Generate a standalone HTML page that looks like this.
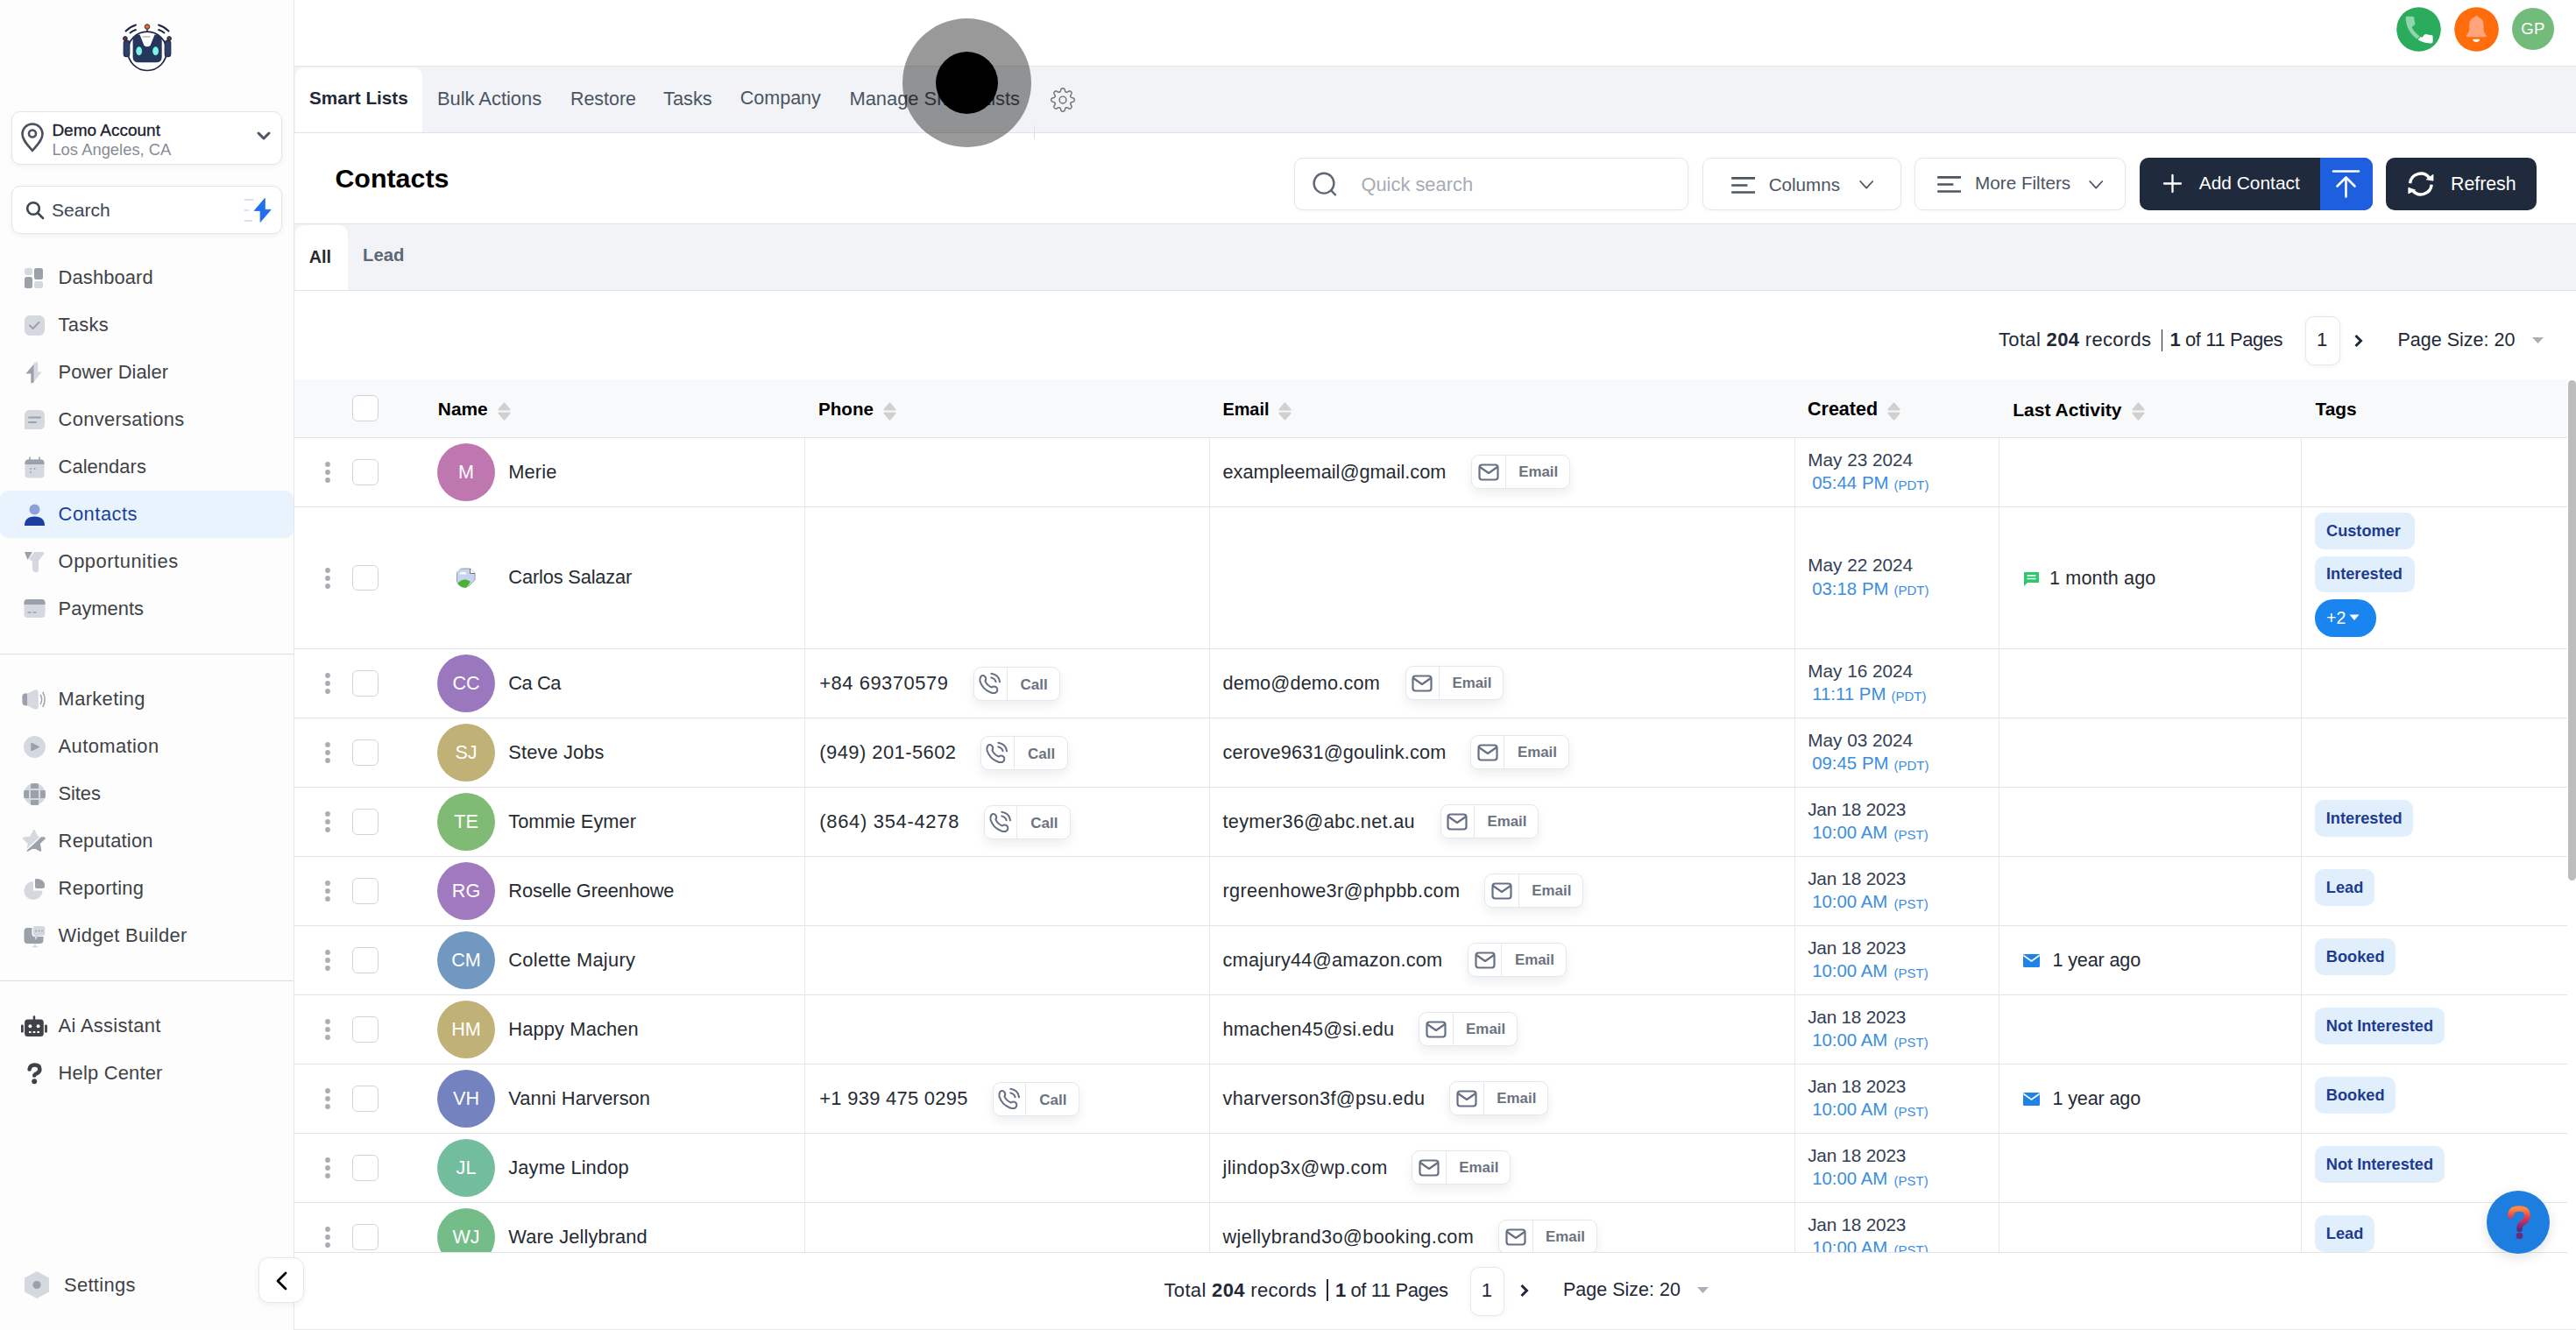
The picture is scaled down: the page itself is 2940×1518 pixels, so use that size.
<!DOCTYPE html>
<html><head><meta charset="utf-8"><style>
html,body{margin:0;padding:0;}
body{width:2940px;height:1518px;position:relative;overflow:hidden;background:#fff;font-family:"Liberation Sans", sans-serif;}
.t{position:absolute;white-space:nowrap;line-height:1;}
svg{overflow:visible}
b{font-weight:700}
</style></head><body>
<div style="position:absolute;left:0px;top:0px;width:335px;height:1518px;background:#fdfdfd"></div>
<div style="position:absolute;left:335px;top:0px;width:1px;height:1518px;background:#e6e7ea"></div>
<svg style="position:absolute;left:138px;top:24px;" width="60" height="60" viewBox="0 0 60 60">
<line x1="30" y1="8" x2="30" y2="12.5" stroke="#1c2541" stroke-width="1.4"/>
<circle cx="30" cy="6.5" r="2.8" fill="#e8643c" stroke="#2a2030" stroke-width="0.9"/>
<circle cx="30" cy="34.3" r="22.2" fill="#fff" stroke="#1c2541" stroke-width="1.7"/>
<path d="M5.5 11.5 Q10.5 6.5 17 4.5" stroke="#1c2541" stroke-width="1.9" fill="none" stroke-linecap="round"/>
<path d="M10.5 13.5 Q13.5 11 17 10" stroke="#1c2541" stroke-width="1.9" fill="none" stroke-linecap="round"/>
<path d="M54.5 11.5 Q49.5 6.5 43 4.5" stroke="#1c2541" stroke-width="1.9" fill="none" stroke-linecap="round"/>
<path d="M49.5 13.5 Q46.5 11 43 10" stroke="#1c2541" stroke-width="1.9" fill="none" stroke-linecap="round"/>
<line x1="5" y1="20" x2="7" y2="24" stroke="#1c2541" stroke-width="1.2"/>
<line x1="55" y1="20" x2="53" y2="24" stroke="#1c2541" stroke-width="1.2"/>
<circle cx="4.9" cy="20" r="2.4" fill="#6a3040" stroke="#1c2541" stroke-width="0.9"/>
<circle cx="55.1" cy="20" r="2.4" fill="#6a3040" stroke="#1c2541" stroke-width="0.9"/>
<rect x="3.2" y="22" width="6.6" height="18.7" rx="3.3" fill="#2e3f6a" stroke="#1c2541" stroke-width="1.1"/>
<rect x="50.2" y="22" width="6.6" height="18.7" rx="3.3" fill="#2e3f6a" stroke="#1c2541" stroke-width="1.1"/>
<path d="M13.6 22 Q14 15.8 21.5 15.5 L26.5 28 Q30 30.5 33.5 28 L38.6 15.5 Q46.3 15.8 46.7 22 L46.7 41 Q46.7 47.3 40 47.3 L20 47.3 Q13.6 47.3 13.6 41 Z" fill="#26375e"/>
<path d="M24 17 L34 17 L33 19 L25.5 19 Z" fill="#c9c9c9"/>
<ellipse cx="20.7" cy="34.2" rx="3.4" ry="5" fill="#7df3e6"/>
<ellipse cx="39.6" cy="34.2" rx="3.4" ry="5" fill="#7df3e6"/>
</svg>
<div style="position:absolute;left:12.5px;top:126.5px;width:309.5px;height:61px;box-sizing:border-box;border:1px solid #e3e5e8;border-radius:10px;background:#fff;box-shadow:0 2px 6px rgba(16,24,40,.05)"></div>
<svg style="position:absolute;left:23px;top:139px;" width="28" height="36" viewBox="0 0 28 36"><path d="M14 2.5 C7.5 2.5 2.5 7.5 2.5 14 C2.5 21 9 27 14 33 C19 27 25.5 21 25.5 14 C25.5 7.5 20.5 2.5 14 2.5 Z" fill="none" stroke="#4b5260" stroke-width="2.6" stroke-linejoin="round"/><circle cx="14" cy="13.5" r="4" fill="none" stroke="#4b5260" stroke-width="2.6"/></svg>
<div class="t" style="left:59.4px;top:138.5px;font-size:19.0px;font-weight:400;color:#1a2030;-webkit-text-stroke:0.3px #1a2030">Demo Account</div>
<div class="t" style="left:59.4px;top:162.4px;font-size:18.4px;font-weight:400;color:#878c94;">Los Angeles, CA</div>
<svg style="position:absolute;left:292px;top:150px;" width="18" height="10" viewBox="0 0 18 10"><path d="M3 2 L9 8 L15 2" fill="none" stroke="#4b5260" stroke-width="3" stroke-linecap="round" stroke-linejoin="round"/></svg>
<div style="position:absolute;left:12.5px;top:212.3px;width:309.5px;height:55px;box-sizing:border-box;border:1px solid #e3e5e8;border-radius:10px;background:#fff;box-shadow:0 2px 6px rgba(16,24,40,.05)"></div>
<svg style="position:absolute;left:28px;top:228px;" width="24" height="24" viewBox="0 0 24 24"><circle cx="10" cy="10" r="6.8" fill="none" stroke="#3e4753" stroke-width="2.6"/><path d="M15 15 L21 21" stroke="#3e4753" stroke-width="2.6" stroke-linecap="round"/></svg>
<div class="t" style="left:59.0px;top:228.7px;font-size:21.1px;font-weight:400;color:#3e4753;">Search</div>
<svg style="position:absolute;left:276px;top:225px;" width="36" height="30" viewBox="0 0 36 30"><path d="M3 3 H13.6 M3 14.9 H7.8 M3 27.1 H12" stroke="#dcdff6" stroke-width="2"/><path d="M26.4 1.2 L26.4 14.3 L33.2 14.3 L21.1 28.4 L21.1 15.5 L14.2 15.5 Z" fill="#1f6ff0" stroke="#1f6ff0" stroke-width="0.8" stroke-linejoin="round"/></svg>
<div style="position:absolute;left:0px;top:559.8px;width:334.6px;height:54px;background:#e8f3fe;border-radius:9px"></div>
<div class="t" style="left:66.6px;top:305.5px;font-size:21.9px;font-weight:400;color:#3f4246;letter-spacing:0.120px;">Dashboard</div>
<svg style="position:absolute;left:27px;top:304.5px;" width="25" height="25" viewBox="0 0 25 25"><rect x="1" y="1" width="9" height="8" rx="2.5" fill="#d5d8de"/><rect x="12" y="1" width="10" height="13" rx="2.5" fill="#9ba1ab"/><rect x="1" y="11" width="9" height="13" rx="2.5" fill="#9ba1ab"/><rect x="12" y="16" width="10" height="8" rx="2.5" fill="#d5d8de"/></svg>
<div class="t" style="left:66.6px;top:359.5px;font-size:21.9px;font-weight:400;color:#3f4246;letter-spacing:0.280px;">Tasks</div>
<svg style="position:absolute;left:27px;top:358.5px;" width="25" height="25" viewBox="0 0 25 25"><rect x="1" y="1" width="23" height="23" rx="6" fill="#d5d8de"/><path d="M7 12.5 L10.5 16 L17.5 9" fill="none" stroke="#9ba1ab" stroke-width="2" stroke-linecap="round" stroke-linejoin="round"/></svg>
<div class="t" style="left:66.6px;top:413.5px;font-size:21.9px;font-weight:400;color:#3f4246;letter-spacing:0.004px;">Power Dialer</div>
<svg style="position:absolute;left:27px;top:412.5px;" width="25" height="25" viewBox="0 0 25 25"><path d="M3.1 12.5 L11.8 2.5 L11.8 22.4 Q11.5 24.2 8.3 24.2 L8.3 13.4 L3.1 13.4 Z" fill="#9ba1ab"/><path d="M11.8 0.7 L16.2 0.5 L16.2 11.5 L20.7 11.5 L11.8 22.4 Z" fill="#d5d8de"/></svg>
<div class="t" style="left:66.6px;top:467.5px;font-size:21.9px;font-weight:400;color:#3f4246;letter-spacing:0.301px;">Conversations</div>
<svg style="position:absolute;left:27px;top:466.5px;" width="25" height="25" viewBox="0 0 25 25"><path d="M1 7 Q1 1 7 1 L18 1 Q24 1 24 7 L24 17 Q24 23 18 23 L1 23 Z" fill="#d5d8de"/><path d="M6 9.5 H19 M6 15 H14" stroke="#9ba1ab" stroke-width="2" stroke-linecap="round"/></svg>
<div class="t" style="left:66.6px;top:521.5px;font-size:21.9px;font-weight:400;color:#3f4246;letter-spacing:0.060px;">Calendars</div>
<svg style="position:absolute;left:27px;top:520.5px;" width="25" height="25" viewBox="0 0 25 25"><rect x="1.5" y="3.5" width="22" height="21" rx="4" fill="#d5d8de"/><path d="M1.5 7.5 Q1.5 3.5 5.5 3.5 L19.5 3.5 Q23.5 3.5 23.5 7.5 L23.5 9 L1.5 9 Z" fill="#9ba1ab"/><path d="M7 0.5 V4 M18 0.5 V4" stroke="#9ba1ab" stroke-width="1.6"/><circle cx="8" cy="14" r="1" fill="#9ba1ab"/><circle cx="12.5" cy="14" r="1" fill="#9ba1ab"/><circle cx="8" cy="18" r="1" fill="#9ba1ab"/></svg>
<div class="t" style="left:66.6px;top:575.5px;font-size:21.9px;font-weight:400;color:#1d3fa0;letter-spacing:0.511px;">Contacts</div>
<svg style="position:absolute;left:27px;top:574.5px;" width="25" height="25" viewBox="0 0 25 25"><circle cx="12.5" cy="6.5" r="6" fill="#8ea0d8"/><path d="M1 25 Q1 14.5 12.5 14.5 Q24 14.5 24 25 Z" fill="#1d3f9e"/></svg>
<div class="t" style="left:66.6px;top:629.5px;font-size:21.9px;font-weight:400;color:#3f4246;letter-spacing:0.529px;">Opportunities</div>
<svg style="position:absolute;left:27px;top:628.5px;" width="25" height="25" viewBox="0 0 25 25"><path d="M1 1 L10 1 L4.5 10 Z" fill="#9ba1ab"/><path d="M12 1 L22 1 Q24 1 23 3.5 L17 11 L17 21 Q17 25 13 24 Q10 23.5 10 20 L10 12 L6 9 Z" fill="#d5d8de"/></svg>
<div class="t" style="left:66.6px;top:683.5px;font-size:21.9px;font-weight:400;color:#3f4246;letter-spacing:0.004px;">Payments</div>
<svg style="position:absolute;left:27px;top:682.5px;" width="25" height="25" viewBox="0 0 25 25"><rect x="0.5" y="1" width="24" height="21" rx="4" fill="#d5d8de"/><path d="M0.5 5 Q0.5 1 4.5 1 L20.5 1 Q24.5 1 24.5 5 L24.5 7 L0.5 7 Z" fill="#9ba1ab"/><path d="M4.5 16 H8.5 M10.5 16 H14.5" stroke="#9ba1ab" stroke-width="1.5"/></svg>
<div class="t" style="left:66.6px;top:786.5px;font-size:21.9px;font-weight:400;color:#3f4246;letter-spacing:0.343px;">Marketing</div>
<svg style="position:absolute;left:27px;top:785.5px;" width="25" height="25" viewBox="0 0 25 25"><path d="M4 5.5 L4 19.2 L1.5 19.2 Q-1.6 19 -1.6 15 L-1.6 9.5 Q-1.6 5.7 1.5 5.5 Z" fill="#9ba1ab"/><path d="M4 5.5 L12 1.8 Q16.8 0 16.8 5 L16.8 19.8 Q16.8 25 12 23.2 L4 19.2 Z" fill="#d5d8de"/><path d="M19.3 7.3 Q22 12.4 19.3 17.5 M22 4.3 Q26.3 12.4 22 20.5" fill="none" stroke="#9ba1ab" stroke-width="1.5" stroke-linecap="round"/></svg>
<div class="t" style="left:66.6px;top:840.5px;font-size:21.9px;font-weight:400;color:#3f4246;letter-spacing:0.424px;">Automation</div>
<svg style="position:absolute;left:27px;top:839.5px;" width="25" height="25" viewBox="0 0 25 25"><circle cx="12.5" cy="12.5" r="12.5" fill="#d5d8de"/><path d="M9 8.5 L17 12.5 L9 16.5 Z" fill="#9ba1ab" stroke="#9ba1ab" stroke-width="1.5" stroke-linejoin="round"/></svg>
<div class="t" style="left:66.6px;top:894.5px;font-size:21.9px;font-weight:400;color:#3f4246;letter-spacing:-0.097px;">Sites</div>
<svg style="position:absolute;left:27px;top:893.5px;" width="25" height="25" viewBox="0 0 25 25"><circle cx="12.5" cy="12.5" r="12.5" fill="#d5d8de"/><g fill="#9ba1ab"><rect x="8" y="8" width="9" height="9"/><path d="M8 0.5 Q12.5 -0.5 17 0.5 L17 6 L8 6 Z"/><path d="M8 24.5 Q12.5 25.5 17 24.5 L17 19 L8 19 Z"/><path d="M0.5 8 Q-0.5 12.5 0.5 17 L6 17 L6 8 Z"/><path d="M24.5 8 Q25.5 12.5 24.5 17 L19 17 L19 8 Z"/></g></svg>
<div class="t" style="left:66.6px;top:948.5px;font-size:21.9px;font-weight:400;color:#3f4246;letter-spacing:0.230px;">Reputation</div>
<svg style="position:absolute;left:27px;top:947.5px;" width="25" height="25" viewBox="0 0 25 25"><defs><clipPath id="rl"><path d="M-19.19 42.18 L31.77 -5.80 L4.35 -34.93 L-46.61 13.06 Z"/></clipPath><clipPath id="rd"><path d="M-18.09 43.35 L32.87 -4.64 L60.29 24.48 L9.33 72.47 Z"/></clipPath></defs><path clip-path="url(#rl)" d="M11.80 0.00 L15.44 7.58 L23.78 8.71 L17.70 14.52 L19.21 22.79 L11.80 18.80 L4.39 22.79 L5.90 14.52 L-0.18 8.71 L8.16 7.58 Z" fill="#d5d8de" stroke="#d5d8de" stroke-width="2.2" stroke-linejoin="round"/><path clip-path="url(#rd)" d="M11.80 0.00 L15.44 7.58 L23.78 8.71 L17.70 14.52 L19.21 22.79 L11.80 18.80 L4.39 22.79 L5.90 14.52 L-0.18 8.71 L8.16 7.58 Z" fill="#9ba1ab" stroke="#9ba1ab" stroke-width="2.2" stroke-linejoin="round"/></svg>
<div class="t" style="left:66.6px;top:1002.5px;font-size:21.9px;font-weight:400;color:#3f4246;letter-spacing:0.305px;">Reporting</div>
<svg style="position:absolute;left:27px;top:1001.5px;" width="25" height="25" viewBox="0 0 25 25"><path d="M11 4 A10.5 10.5 0 1 0 21.5 14.5 L11 14.5 Z" fill="#d5d8de"/><path d="M14 1 A10 10 0 0 1 24 11 L14 11 Z" fill="#9ba1ab" stroke="#fff" stroke-width="0"/><path d="M14 1 Q24 1 24 9 Q24 12 21 12 L15 12 Q13 12 13 10 L13 2 Q13 1 14 1Z" fill="#9ba1ab"/></svg>
<div class="t" style="left:66.6px;top:1056.5px;font-size:21.9px;font-weight:400;color:#3f4246;letter-spacing:0.330px;">Widget Builder</div>
<svg style="position:absolute;left:27px;top:1055.5px;" width="25" height="25" viewBox="0 0 25 25"><rect x="0.5" y="3" width="22" height="18" rx="4" fill="#9ba1ab"/><path d="M10 24.5 H16 M13 21 V24.5" stroke="#d5d8de" stroke-width="1.5"/><rect x="10" y="0.5" width="15" height="12" rx="3" fill="#d5d8de" stroke="#fff" stroke-width="1.2"/><path d="M13 17 L13 12 L17 12 Z" fill="#d5d8de"/><circle cx="14" cy="6.5" r="0.9" fill="#9ba1ab"/><circle cx="17.5" cy="6.5" r="0.9" fill="#9ba1ab"/><circle cx="21" cy="6.5" r="0.9" fill="#9ba1ab"/></svg>
<div class="t" style="left:66.6px;top:1159.8px;font-size:21.9px;font-weight:400;color:#3f4246;letter-spacing:0.317px;">Ai Assistant</div>
<svg style="position:absolute;left:24px;top:1159.8px;" width="30" height="26" viewBox="0 0 30 26"><rect x="4.1" y="3.4" width="21.7" height="19.6" rx="3.5" fill="#3f4246"/><rect x="13.7" y="-0.7" width="2.5" height="5" rx="1.2" fill="#3f4246"/><rect x="0" y="9.5" width="2.8" height="9.1" rx="1.2" fill="#3f4246"/><rect x="27.1" y="9.5" width="2.8" height="9.1" rx="1.2" fill="#3f4246"/><circle cx="10.4" cy="11.2" r="1.95" fill="#fff"/><circle cx="19.6" cy="11.2" r="1.95" fill="#fff"/><path d="M9 17.9 H11.6 M13.7 17.9 H16.3 M18.4 17.9 H21" stroke="#fff" stroke-width="2"/></svg>
<div class="t" style="left:66.6px;top:1213.5px;font-size:21.9px;font-weight:400;color:#3f4246;letter-spacing:0.194px;">Help Center</div>
<svg style="position:absolute;left:30px;top:1213.5px;" width="19" height="25" viewBox="0 0 19 25"><path d="M3.6 6.6 Q4.2 1.6 9.6 1.6 Q15.4 1.6 15.4 6.6 Q15.4 9.4 12.3 11 Q9.2 12.5 9.2 13.6" fill="none" stroke="#3f4246" stroke-width="4.5" stroke-linecap="round" stroke-linejoin="round"/><circle cx="9.2" cy="20.3" r="2.95" fill="#3f4246"/></svg>
<div style="position:absolute;left:0px;top:746px;width:335px;height:1px;background:#dcdde0"></div>
<div style="position:absolute;left:0px;top:1119px;width:335px;height:1px;background:#dcdde0"></div>
<svg style="position:absolute;left:27px;top:1451px;" width="30" height="31" viewBox="0 0 30 31"><path d="M15 1 L28 8.2 L28 22.8 L15 30 L2 22.8 L2 8.2 Z" fill="#d5d8de" stroke="#d5d8de" stroke-width="2" stroke-linejoin="round"/><circle cx="15" cy="15.5" r="4.6" fill="#9ba1ab"/></svg>
<div class="t" style="left:73.0px;top:1455.9px;font-size:21.9px;font-weight:400;color:#3f4246;letter-spacing:0.338px;">Settings</div>
<div style="position:absolute;left:294.5px;top:1435.2px;width:52px;height:52px;box-sizing:border-box;background:#fff;border:1px solid #e6e7ea;border-radius:12px;box-shadow:0 2px 6px rgba(16,24,40,.06)"></div>
<svg style="position:absolute;left:312px;top:1450px;" width="18" height="24" viewBox="0 0 18 24"><path d="M14 3 L5 12 L14 21" fill="none" stroke="#000" stroke-width="2.8" stroke-linecap="round" stroke-linejoin="round"/></svg>
<div style="position:absolute;left:336px;top:75px;width:2604px;height:1px;background:#e3e5e8"></div>
<svg style="position:absolute;left:2735px;top:8px;" width="52" height="52" viewBox="0 0 52 52"><defs><clipPath id="pc1"><path d="M-5 -5 H33.5 L-5 33.5 Z"/></clipPath><clipPath id="pc2"><path d="M34.5 -5 H40 V40 H-5 V34.5 Z"/></clipPath></defs><circle cx="25.5" cy="25.5" r="25.3" fill="#2aac5c"/><g transform="translate(5.5,5.5) scale(1.72)"><path clip-path="url(#pc1)" d="M20.01 15.38c-1.23 0-2.42-.2-3.530-.56-.35-.12-.74-.03-1.01.24l-1.57 1.97c-2.83-1.35-5.48-3.9-6.89-6.83l1.95-1.66c.27-.28.35-.67.24-1.02-.37-1.11-.56-2.3-.56-3.53 0-.54-.45-.99-.99-.99H4.19C3.65 3 3 3.24 3 3.99 3 13.28 10.73 21 20.01 21c.71 0 .99-.63.99-1.18v-3.45c0-.54-.45-.99-.99-.99z" fill="#8fd6ab"/><path clip-path="url(#pc2)" d="M20.01 15.38c-1.23 0-2.42-.2-3.530-.56-.35-.12-.74-.03-1.01.24l-1.57 1.97c-2.83-1.35-5.48-3.9-6.89-6.83l1.950-1.66c.27-.28.35-.67.24-1.02-.37-1.11-.56-2.3-.56-3.53 0-.54-.45-.99-.99-.99H4.19C3.65 3 3 3.24 3 3.99 3 13.28 10.73 21 20.01 21c.71 0 .99-.63.99-1.18v-3.45c0-.54-.45-.99-.99-.99z" fill="#fff"/></g></svg>
<svg style="position:absolute;left:2801px;top:8px;" width="52" height="52" viewBox="0 0 52 52"><circle cx="25.5" cy="25.5" r="25.3" fill="#fe6c0b"/><path d="M25.3 9.9 Q27 9.9 27.3 11.6 Q33.5 13.2 33.5 20.5 L33.5 26 Q34 30 36.8 32.2 Q37.2 34.3 35 34.3 L15.6 34.3 Q13.4 34.3 13.8 32.2 Q16.6 30 17.1 26 L17.1 20.5 Q17.1 13.2 23.3 11.6 Q23.6 9.9 25.3 9.9 Z" fill="#ffa47c"/><path d="M21 36.8 L29.4 36.8 Q28.5 40 25.2 40 Q21.9 40 21 36.8 Z" fill="#fff"/></svg>
<div style="position:absolute;left:2867px;top:9px;width:48px;height:48px;border-radius:50%;background:#72bb7a;color:#fff;font-size:18.6px;line-height:48px;text-align:center;letter-spacing:0.3px">GP</div>
<div style="position:absolute;left:336px;top:76px;width:2604px;height:75px;background:#f1f3f6"></div>
<div style="position:absolute;left:336px;top:151px;width:2604px;height:1px;background:#dfe2e6"></div>
<div style="position:absolute;left:337px;top:76.5px;width:145.4px;height:74.5px;background:#fff;border-radius:10px 10px 0 0"></div>
<div class="t" style="left:353.0px;top:102.1px;font-size:20.7px;font-weight:700;color:#1f2937;">Smart Lists</div>
<div class="t" style="left:498.9px;top:102.1px;font-size:21.9px;font-weight:400;color:#4a5563;">Bulk Actions</div>
<div class="t" style="left:651.0px;top:102.5px;font-size:21.4px;font-weight:400;color:#4a5563;">Restore</div>
<div class="t" style="left:757.0px;top:102.1px;font-size:21.8px;font-weight:400;color:#4a5563;">Tasks</div>
<div class="t" style="left:844.8px;top:102.4px;font-size:21.5px;font-weight:400;color:#4a5563;">Company</div>
<div class="t" style="left:969.4px;top:102.1px;font-size:21.9px;font-weight:400;color:#4a5563;">Manage Smart Lists</div>
<svg style="position:absolute;left:1198px;top:98.5px;" width="30" height="30" viewBox="0 0 30 30"><path d="M15.00 1.80 L15.35 1.82 L15.69 1.86 L16.03 1.96 L16.35 2.12 L16.66 2.37 L16.94 2.76 L17.17 3.30 L17.35 3.94 L17.51 4.56 L17.66 5.07 L17.83 5.44 L18.02 5.70 L18.23 5.88 L18.45 6.02 L18.67 6.13 L18.91 6.21 L19.17 6.27 L19.44 6.28 L19.76 6.24 L20.14 6.10 L20.61 5.85 L21.16 5.51 L21.74 5.19 L22.28 4.97 L22.75 4.89 L23.15 4.93 L23.50 5.05 L23.80 5.23 L24.08 5.43 L24.33 5.67 L24.57 5.92 L24.77 6.20 L24.95 6.50 L25.07 6.85 L25.11 7.25 L25.03 7.72 L24.81 8.26 L24.49 8.84 L24.15 9.39 L23.90 9.86 L23.76 10.24 L23.72 10.56 L23.73 10.83 L23.79 11.09 L23.87 11.33 L23.98 11.55 L24.12 11.77 L24.30 11.98 L24.56 12.17 L24.93 12.34 L25.44 12.49 L26.06 12.65 L26.70 12.83 L27.24 13.06 L27.63 13.34 L27.88 13.65 L28.04 13.97 L28.14 14.31 L28.18 14.65 L28.20 15.00 L28.18 15.35 L28.14 15.69 L28.04 16.03 L27.88 16.35 L27.63 16.66 L27.24 16.94 L26.70 17.17 L26.06 17.35 L25.44 17.51 L24.93 17.66 L24.56 17.83 L24.30 18.02 L24.12 18.23 L23.98 18.45 L23.87 18.67 L23.79 18.91 L23.73 19.17 L23.72 19.44 L23.76 19.76 L23.90 20.14 L24.15 20.61 L24.49 21.16 L24.81 21.74 L25.03 22.28 L25.11 22.75 L25.07 23.15 L24.95 23.50 L24.77 23.80 L24.57 24.08 L24.33 24.33 L24.08 24.57 L23.80 24.77 L23.50 24.95 L23.15 25.07 L22.75 25.11 L22.28 25.03 L21.74 24.81 L21.16 24.49 L20.61 24.15 L20.14 23.90 L19.76 23.76 L19.44 23.72 L19.17 23.73 L18.91 23.79 L18.67 23.87 L18.45 23.98 L18.23 24.12 L18.02 24.30 L17.83 24.56 L17.66 24.93 L17.51 25.44 L17.35 26.06 L17.17 26.70 L16.94 27.24 L16.66 27.63 L16.35 27.88 L16.03 28.04 L15.69 28.14 L15.35 28.18 L15.00 28.20 L14.65 28.18 L14.31 28.14 L13.97 28.04 L13.65 27.88 L13.34 27.63 L13.06 27.24 L12.83 26.70 L12.65 26.06 L12.49 25.44 L12.34 24.93 L12.17 24.56 L11.98 24.30 L11.77 24.12 L11.55 23.98 L11.33 23.87 L11.09 23.79 L10.83 23.73 L10.56 23.72 L10.24 23.76 L9.86 23.90 L9.39 24.15 L8.84 24.49 L8.26 24.81 L7.72 25.03 L7.25 25.11 L6.85 25.07 L6.50 24.95 L6.20 24.77 L5.92 24.57 L5.67 24.33 L5.43 24.08 L5.23 23.80 L5.05 23.50 L4.93 23.15 L4.89 22.75 L4.97 22.28 L5.19 21.74 L5.51 21.16 L5.85 20.61 L6.10 20.14 L6.24 19.76 L6.28 19.44 L6.27 19.17 L6.21 18.91 L6.13 18.67 L6.02 18.45 L5.88 18.23 L5.70 18.02 L5.44 17.83 L5.07 17.66 L4.56 17.51 L3.94 17.35 L3.30 17.17 L2.76 16.94 L2.37 16.66 L2.12 16.35 L1.96 16.03 L1.86 15.69 L1.82 15.35 L1.80 15.00 L1.82 14.65 L1.86 14.31 L1.96 13.97 L2.12 13.65 L2.37 13.34 L2.76 13.06 L3.30 12.83 L3.94 12.65 L4.56 12.49 L5.07 12.34 L5.44 12.17 L5.70 11.98 L5.88 11.77 L6.02 11.55 L6.13 11.33 L6.21 11.09 L6.27 10.83 L6.28 10.56 L6.24 10.24 L6.10 9.86 L5.85 9.39 L5.51 8.84 L5.19 8.26 L4.97 7.72 L4.89 7.25 L4.93 6.85 L5.05 6.50 L5.23 6.20 L5.43 5.92 L5.67 5.67 L5.92 5.43 L6.20 5.23 L6.50 5.05 L6.85 4.93 L7.25 4.89 L7.72 4.97 L8.26 5.19 L8.84 5.51 L9.39 5.85 L9.86 6.10 L10.24 6.24 L10.56 6.28 L10.83 6.27 L11.09 6.21 L11.33 6.13 L11.55 6.02 L11.77 5.88 L11.98 5.70 L12.17 5.44 L12.34 5.07 L12.49 4.56 L12.65 3.94 L12.83 3.30 L13.06 2.76 L13.34 2.37 L13.65 2.12 L13.97 1.96 L14.31 1.86 L14.65 1.82 Z" fill="none" stroke="#6d6f73" stroke-width="1.45" stroke-linejoin="round"/><circle cx="15" cy="15" r="3.9" fill="none" stroke="#6d6f73" stroke-width="1.45"/></svg>
<div style="position:absolute;left:1180px;top:142.5px;width:1px;height:16px;background:#dfe1e5"></div>
<div style="position:absolute;left:336px;top:255px;width:2604px;height:1px;background:#e2e4e8"></div>
<div class="t" style="left:382.4px;top:187.6px;font-size:30.4px;font-weight:700;color:#000;">Contacts</div>
<div style="position:absolute;left:1477px;top:180px;width:450px;height:60px;box-sizing:border-box;background:#fff;border:1px solid #e4e6ea;border-radius:10px;box-shadow:0 1px 4px rgba(16,24,40,.04)"></div>
<svg style="position:absolute;left:1495px;top:194px;" width="32" height="32" viewBox="0 0 32 32"><circle cx="16" cy="15.2" r="11.4" fill="none" stroke="#5f6775" stroke-width="2.4"/><path d="M24 23.2 L29 28.3" stroke="#5f6775" stroke-width="2.4" stroke-linecap="round"/></svg>
<div class="t" style="left:1553.4px;top:199.8px;font-size:21.9px;font-weight:400;color:#a5acb4;">Quick search</div>
<div style="position:absolute;left:1942.6px;top:180px;width:227px;height:60px;box-sizing:border-box;background:#fff;border:1px solid #e4e6ea;border-radius:10px;box-shadow:0 1px 4px rgba(16,24,40,.04)"></div>
<svg style="position:absolute;left:1975px;top:201px;" width="29" height="21" viewBox="0 0 29 21"><path d="M1.2 2.4 H28 M1.2 10.5 H19.4 M1.2 18.5 H28" stroke="#4b5563" stroke-width="2.7" stroke-linecap="butt"/></svg>
<div class="t" style="left:2018.7px;top:200.9px;font-size:20.6px;font-weight:400;color:#4b5563;">Columns</div>
<svg style="position:absolute;left:2120px;top:204px;" width="20" height="14" viewBox="0 0 20 14"><path d="M3.2 3 L10.2 10.6 L17.2 3" fill="none" stroke="#4b5563" stroke-width="1.75" stroke-linecap="round" stroke-linejoin="round"/></svg>
<div style="position:absolute;left:2185.2px;top:180px;width:241.3px;height:60px;box-sizing:border-box;background:#fff;border:1px solid #e4e6ea;border-radius:10px;box-shadow:0 1px 4px rgba(16,24,40,.04)"></div>
<svg style="position:absolute;left:2210px;top:200px;" width="29" height="21" viewBox="0 0 29 21"><path d="M1.2 2.4 H28 M1.2 10.5 H19.4 M1.2 18.5 H28" stroke="#4b5563" stroke-width="2.7" stroke-linecap="butt"/></svg>
<div class="t" style="left:2254.0px;top:198.5px;font-size:20.7px;font-weight:400;color:#4b5563;">More Filters</div>
<svg style="position:absolute;left:2382px;top:203.5px;" width="20" height="14" viewBox="0 0 20 14"><path d="M3.2 3 L10.2 10.6 L17.2 3" fill="none" stroke="#4b5563" stroke-width="1.75" stroke-linecap="round" stroke-linejoin="round"/></svg>
<div style="position:absolute;left:2442px;top:180px;width:266px;height:59.6px;background:#1f2a3c;border-radius:10px;overflow:hidden"></div>
<div style="position:absolute;left:2647.7px;top:180px;width:60.3px;height:59.6px;background:#1e5fdf;border-radius:0 10px 10px 0"></div>
<svg style="position:absolute;left:2469px;top:199px;" width="21" height="21" viewBox="0 0 21 21"><path d="M10.5 1 V20 M1 10.5 H20" stroke="#fff" stroke-width="2.3" stroke-linecap="round"/></svg>
<div class="t" style="left:2509.8px;top:198.9px;font-size:20.9px;font-weight:400;color:#fff;">Add Contact</div>
<svg style="position:absolute;left:2660px;top:193px;" width="35" height="34" viewBox="0 0 35 34"><path d="M3 2.5 H32" stroke="#fff" stroke-width="2.6" stroke-linecap="round"/><path d="M17.5 31.5 V9.5 M7.5 19.5 L17.5 9.5 L27.5 19.5" fill="none" stroke="#fff" stroke-width="2.6" stroke-linecap="round" stroke-linejoin="round"/></svg>
<div style="position:absolute;left:2723px;top:180px;width:171.8px;height:59.6px;background:#1f2a3c;border-radius:10px"></div>
<svg style="position:absolute;left:2748px;top:195px;" width="30" height="30" viewBox="0 0 30 30"><path d="M2.6 14.2 A12.3 12.3 0 0 1 24.5 7.9 M27.2 15.8 A12.3 12.3 0 0 1 5.3 22.1" fill="none" stroke="#fff" stroke-width="3.4"/><path d="M29 4.3 L29 11.2 L21.2 9.8 Z M0.8 19.2 L0.8 25.9 L8.6 21.9 Z" fill="#fff" stroke="#fff" stroke-width="0.8" stroke-linejoin="round"/></svg>
<div class="t" style="left:2797.0px;top:199.5px;font-size:21.3px;font-weight:400;color:#fff;">Refresh</div>
<div style="position:absolute;left:336px;top:256px;width:2604px;height:75px;background:#f1f3f6"></div>
<div style="position:absolute;left:336px;top:331px;width:2604px;height:1px;background:#e2e4e8"></div>
<div style="position:absolute;left:337px;top:257px;width:60.2px;height:74px;background:#fff;border-radius:10px 10px 0 0"></div>
<div class="t" style="left:352.7px;top:284.0px;font-size:19.8px;font-weight:700;color:#24292f;">All</div>
<div class="t" style="left:414.0px;top:280.7px;font-size:20.3px;font-weight:700;color:#5b6873;">Lead</div>
<div class="t" style="left:2281.0px;top:377.4px;font-size:22.0px;font-weight:400;color:#1f2937;letter-spacing:0.33px">Total <b>204</b> records</div>
<div style="position:absolute;left:2466.5px;top:376px;width:1.8px;height:24.7px;background:#1f2937"></div>
<div class="t" style="left:2476.5px;top:377.4px;font-size:22.0px;font-weight:400;color:#1f2937;letter-spacing:-0.42px"><b>1</b> of 11 Pages</div>
<div style="position:absolute;left:2631px;top:360.6px;width:39.5px;height:56px;box-sizing:border-box;background:#fff;border:1px solid #e6e7ea;border-radius:10px;box-shadow:0 1px 6px rgba(16,24,40,.05)"></div>
<div class="t" style="left:2644.0px;top:377.4px;font-size:22px;font-weight:400;color:#1f2937;">1</div>
<svg style="position:absolute;left:2686px;top:381px;" width="12" height="16" viewBox="0 0 12 16"><path d="M2.5 2 L8.5 8 L2.5 14" fill="none" stroke="#1f2937" stroke-width="3"/></svg>
<div class="t" style="left:2736.5px;top:377.8px;font-size:21.5px;font-weight:400;color:#1f2937;">Page Size: 20</div>
<svg style="position:absolute;left:2889.6px;top:385px;" width="13" height="8" viewBox="0 0 13 8"><path d="M0 0 H13 L6.5 7 Z" fill="#a9b0b8"/></svg>
<div style="position:absolute;left:336px;top:433px;width:2594px;height:66px;background:#f8f9fb"></div>
<div style="position:absolute;left:336px;top:499px;width:2594px;height:1px;background:#e2e4e8"></div>
<div style="position:absolute;left:402px;top:451px;width:29.5px;height:29.5px;box-sizing:border-box;background:#fff;border:1.3px solid #cfd4dc;border-radius:6px"></div>
<div class="t" style="left:499.8px;top:457.1px;font-size:20.9px;font-weight:700;color:#000;">Name</div>
<svg style="position:absolute;left:568px;top:458.5px;" width="15" height="21" viewBox="0 0 15 21"><path d="M7.5 0.5 Q8 0.5 8.5 1 L14.5 8 Q15 9.5 13.5 9.5 H1.5 Q0 9.5 0.5 8 L6.5 1 Q7 0.5 7.5 0.5 Z M7.5 20.5 Q8 20.5 8.5 20 L14.5 13 Q15 11.5 13.5 11.5 H1.5 Q0 11.5 0.5 13 L6.5 20 Q7 20.5 7.5 20.5 Z" fill="#d0d0d0"/></svg>
<div class="t" style="left:934.0px;top:457.4px;font-size:20.6px;font-weight:700;color:#000;">Phone</div>
<svg style="position:absolute;left:1008px;top:458.5px;" width="15" height="21" viewBox="0 0 15 21"><path d="M7.5 0.5 Q8 0.5 8.5 1 L14.5 8 Q15 9.5 13.5 9.5 H1.5 Q0 9.5 0.5 8 L6.5 1 Q7 0.5 7.5 0.5 Z M7.5 20.5 Q8 20.5 8.5 20 L14.5 13 Q15 11.5 13.5 11.5 H1.5 Q0 11.5 0.5 13 L6.5 20 Q7 20.5 7.5 20.5 Z" fill="#d0d0d0"/></svg>
<div class="t" style="left:1395.4px;top:458.0px;font-size:19.9px;font-weight:700;color:#000;">Email</div>
<svg style="position:absolute;left:1459px;top:458.5px;" width="15" height="21" viewBox="0 0 15 21"><path d="M7.5 0.5 Q8 0.5 8.5 1 L14.5 8 Q15 9.5 13.5 9.5 H1.5 Q0 9.5 0.5 8 L6.5 1 Q7 0.5 7.5 0.5 Z M7.5 20.5 Q8 20.5 8.5 20 L14.5 13 Q15 11.5 13.5 11.5 H1.5 Q0 11.5 0.5 13 L6.5 20 Q7 20.5 7.5 20.5 Z" fill="#d0d0d0"/></svg>
<div class="t" style="left:2063.0px;top:456.6px;font-size:21.5px;font-weight:700;color:#000;">Created</div>
<svg style="position:absolute;left:2153.6px;top:458.5px;" width="15" height="21" viewBox="0 0 15 21"><path d="M7.5 0.5 Q8 0.5 8.5 1 L14.5 8 Q15 9.5 13.5 9.5 H1.5 Q0 9.5 0.5 8 L6.5 1 Q7 0.5 7.5 0.5 Z M7.5 20.5 Q8 20.5 8.5 20 L14.5 13 Q15 11.5 13.5 11.5 H1.5 Q0 11.5 0.5 13 L6.5 20 Q7 20.5 7.5 20.5 Z" fill="#d0d0d0"/></svg>
<div class="t" style="left:2297.3px;top:457.0px;font-size:21px;font-weight:700;color:#000;">Last Activity</div>
<svg style="position:absolute;left:2433px;top:458.5px;" width="15" height="21" viewBox="0 0 15 21"><path d="M7.5 0.5 Q8 0.5 8.5 1 L14.5 8 Q15 9.5 13.5 9.5 H1.5 Q0 9.5 0.5 8 L6.5 1 Q7 0.5 7.5 0.5 Z M7.5 20.5 Q8 20.5 8.5 20 L14.5 13 Q15 11.5 13.5 11.5 H1.5 Q0 11.5 0.5 13 L6.5 20 Q7 20.5 7.5 20.5 Z" fill="#d0d0d0"/></svg>
<div class="t" style="left:2642.5px;top:457.1px;font-size:20.9px;font-weight:700;color:#000;">Tags</div>
<div style="position:absolute;left:336px;top:500px;width:2594px;height:929px;overflow:hidden">
<div style="position:absolute;left:582.0px;top:0.0px;width:1px;height:929px;background:#e6e7ea"></div>
<div style="position:absolute;left:1043.5px;top:0.0px;width:1px;height:929px;background:#e6e7ea"></div>
<div style="position:absolute;left:1711.5px;top:0.0px;width:1px;height:929px;background:#e6e7ea"></div>
<div style="position:absolute;left:1945.4px;top:0.0px;width:1px;height:929px;background:#e6e7ea"></div>
<div style="position:absolute;left:2290.4px;top:0.0px;width:1px;height:929px;background:#e6e7ea"></div>
<div style="position:absolute;left:2594.0px;top:0.0px;width:1px;height:929px;background:#e6e7ea"></div>
<div style="position:absolute;left:0.0px;top:78.0px;width:2594px;height:1px;background:#e2e4e8"></div>
<div style="position:absolute;left:0.0px;top:240.0px;width:2594px;height:1px;background:#e2e4e8"></div>
<div style="position:absolute;left:0.0px;top:319.0px;width:2594px;height:1px;background:#e2e4e8"></div>
<div style="position:absolute;left:0.0px;top:398.0px;width:2594px;height:1px;background:#e2e4e8"></div>
<div style="position:absolute;left:0.0px;top:477.0px;width:2594px;height:1px;background:#e2e4e8"></div>
<div style="position:absolute;left:0.0px;top:556.0px;width:2594px;height:1px;background:#e2e4e8"></div>
<div style="position:absolute;left:0.0px;top:635.0px;width:2594px;height:1px;background:#e2e4e8"></div>
<div style="position:absolute;left:0.0px;top:714.0px;width:2594px;height:1px;background:#e2e4e8"></div>
<div style="position:absolute;left:0.0px;top:793.0px;width:2594px;height:1px;background:#e2e4e8"></div>
<div style="position:absolute;left:0.0px;top:872.0px;width:2594px;height:1px;background:#e2e4e8"></div>
<div style="position:absolute;left:0.0px;top:951.0px;width:2594px;height:1px;background:#e2e4e8"></div>
<svg style="position:absolute;left:34.6px;top:27.0px" width="6" height="24" viewBox="0 0 6 24"><circle cx="3" cy="3" r="2.9" fill="#a9aeb4"/><circle cx="3" cy="12" r="2.9" fill="#a9aeb4"/><circle cx="3" cy="21" r="2.9" fill="#a9aeb4"/></svg>
<div style="position:absolute;left:66.0px;top:24.2px;width:29.5px;height:29.5px;box-sizing:border-box;background:#fff;border:1.3px solid #cfd4dc;border-radius:6px"></div>
<div style="position:absolute;left:163.0px;top:6.0px;width:66px;height:66px;border-radius:50%;background:#bf77af"></div>
<div class="t" style="left:163.0px;top:28.0px;font-size:21.6px;font-weight:400;color:#fff;width:66px;text-align:center">M</div>
<div class="t" style="left:244.3px;top:27.5px;font-size:21.85px;font-weight:400;color:#262b33;letter-spacing:0.116px;">Merie</div>
<div class="t" style="left:1059.5px;top:27.6px;font-size:21.7px;font-weight:400;color:#262b33;letter-spacing:0.010px;">exampleemail@gmail.com</div>
<div style="position:absolute;left:1343.3px;top:19.3px;width:112.5px;height:38.3px;box-sizing:border-box;background:#fff;border:1px solid #e6e7ea;border-radius:9px;box-shadow:0 6px 12px rgba(16,24,40,.07)"></div>
<div style="position:absolute;left:1381.7px;top:19.3px;width:1px;height:38.3px;background:#e6e7ea"></div>
<svg style="position:absolute;left:1349.8px;top:27.5px" width="26" height="22" viewBox="0 0 25 22"><rect x="2" y="2.5" width="21" height="17" rx="3" fill="none" stroke="#667085" stroke-width="2.2"/><path d="M2.5 5 L12.5 12 L22.5 5" fill="none" stroke="#667085" stroke-width="2.2" stroke-linejoin="round"/></svg>
<div class="t" style="left:1397.2px;top:30.7px;font-size:16.9px;font-weight:700;color:#6b7280;">Email</div>
<div class="t" style="left:1727.2px;top:14.6px;font-size:20.8px;font-weight:400;color:#344054;letter-spacing:-0.026px;">May 23 2024</div>
<div class="t" style="left:1732.2px;top:41.1px;font-size:20.4px;font-weight:400;color:#3b8ee0;">05:44 PM</div>
<div class="t" style="left:1825.5px;top:45.7px;font-size:15.0px;font-weight:400;color:#3b8ee0;">(PDT)</div>
<svg style="position:absolute;left:34.6px;top:147.5px" width="6" height="24" viewBox="0 0 6 24"><circle cx="3" cy="3" r="2.9" fill="#a9aeb4"/><circle cx="3" cy="12" r="2.9" fill="#a9aeb4"/><circle cx="3" cy="21" r="2.9" fill="#a9aeb4"/></svg>
<div style="position:absolute;left:66.0px;top:144.7px;width:29.5px;height:29.5px;box-sizing:border-box;background:#fff;border:1.3px solid #cfd4dc;border-radius:6px"></div>
<svg style="position:absolute;left:184.0px;top:147.0px" width="24" height="24" viewBox="0 0 24 24"><defs><clipPath id="bic"><circle cx="12" cy="12" r="12"/></clipPath></defs><g clip-path="url(#bic)"><rect x="0" y="0" width="24" height="24" fill="#fff"/><path d="M1.5 2 H16.5 L22 7.5 V15 L15 22 H1.5 Z" fill="#c6d4f1" stroke="#8d939b" stroke-width="0.9"/><path d="M16.5 2 V7.5 H22" fill="#fff" stroke="#6d737b" stroke-width="1"/><path d="M4 8.5 Q6 5 9 6 Q11 5 12.5 8.5 Z" fill="#fff"/><path d="M2 19 Q6 14 12 14.5 Q15 15 17 17 L12 24 H2 Z" fill="#4fb036"/><path d="M15.5 23 L23 15.5" stroke="#fff" stroke-width="1.5"/></g></svg>
<div class="t" style="left:244.3px;top:148.0px;font-size:21.85px;font-weight:400;color:#262b33;letter-spacing:-0.169px;">Carlos Salazar</div>
<div class="t" style="left:1727.2px;top:135.1px;font-size:20.8px;font-weight:400;color:#344054;letter-spacing:-0.026px;">May 22 2024</div>
<div class="t" style="left:1732.2px;top:161.6px;font-size:20.4px;font-weight:400;color:#3b8ee0;">03:18 PM</div>
<div class="t" style="left:1825.5px;top:166.2px;font-size:15.0px;font-weight:400;color:#3b8ee0;">(PDT)</div>
<svg style="position:absolute;left:1972.5px;top:151.5px" width="19" height="18" viewBox="0 0 19 18"><path d="M1 1 H18 V13 H5 L1 17 Z" fill="#2dc76d"/><path d="M4.5 5 H14.5 M4.5 8.5 H14.5" stroke="#fff" stroke-width="1.5"/></svg>
<div class="t" style="left:2003.0px;top:148.7px;font-size:21.6px;font-weight:400;color:#262b33;letter-spacing:0.131px;">1 month ago</div>
<div style="position:absolute;left:2306.0px;top:85.0px;width:113.8px;height:41.8px;background:#e1effd;border-radius:10px"></div>
<div class="t" style="left:2319.0px;top:96.6px;font-size:18.2px;font-weight:700;color:#1f3b8f;">Customer</div>
<div style="position:absolute;left:2306.0px;top:134.5px;width:113.8px;height:41.8px;background:#e1effd;border-radius:10px"></div>
<div class="t" style="left:2319.0px;top:146.1px;font-size:18.2px;font-weight:700;color:#1f3b8f;">Interested</div>
<div style="position:absolute;left:2306.0px;top:184.4px;width:69.6px;height:42.2px;background:#1a85ee;border-radius:21px"></div>
<div class="t" style="left:2319.0px;top:196.4px;font-size:19.5px;font-weight:400;color:#fff;">+2</div>
<svg style="position:absolute;left:2345.0px;top:201.0px" width="12" height="8" viewBox="0 0 12 8"><path d="M0.5 0.5 H11.5 L6 7 Z" fill="#fff"/></svg>
<svg style="position:absolute;left:34.6px;top:268.0px" width="6" height="24" viewBox="0 0 6 24"><circle cx="3" cy="3" r="2.9" fill="#a9aeb4"/><circle cx="3" cy="12" r="2.9" fill="#a9aeb4"/><circle cx="3" cy="21" r="2.9" fill="#a9aeb4"/></svg>
<div style="position:absolute;left:66.0px;top:265.2px;width:29.5px;height:29.5px;box-sizing:border-box;background:#fff;border:1.3px solid #cfd4dc;border-radius:6px"></div>
<div style="position:absolute;left:163.0px;top:247.0px;width:66px;height:66px;border-radius:50%;background:#9b78bd"></div>
<div class="t" style="left:163.0px;top:269.0px;font-size:21.6px;font-weight:400;color:#fff;width:66px;text-align:center">CC</div>
<div class="t" style="left:244.3px;top:268.5px;font-size:21.85px;font-weight:400;color:#262b33;letter-spacing:-0.450px;">Ca Ca</div>
<div class="t" style="left:599.3px;top:269.0px;font-size:21.9px;font-weight:400;color:#262b33;letter-spacing:0.539px;">+84 69370579</div>
<div style="position:absolute;left:775.0px;top:261.3px;width:99.2px;height:38.3px;box-sizing:border-box;background:#fff;border:1px solid #e6e7ea;border-radius:9px;box-shadow:0 6px 12px rgba(16,24,40,.07)"></div>
<div style="position:absolute;left:812.6px;top:261.3px;width:1px;height:38.3px;background:#e6e7ea"></div>
<svg style="position:absolute;left:780.0px;top:267.0px" width="26" height="26" viewBox="0 0 26 26"><path d="M3.0 6.0 C3.5 4.0 6.5 3.2 8.3 5.3 C9.6 6.9 9.4 8.8 8.4 10.4 C9.6 13.2 12.7 16.3 15.9 17.5 C17.4 16.4 19.6 16.2 21.2 17.6 C23.0 19.3 22.6 22.3 20.4 23.6 C18.8 24.6 16.5 24.0 14.4 23.2 C8.8 21.0 4.3 16.4 2.6 10.8 C2.1 9.1 2.4 7.4 3.0 6.0 Z" fill="none" stroke="#667085" stroke-width="2.05" stroke-linejoin="round"/><path d="M15.3 6.4 Q19.6 7.2 20.6 11.3 M15.3 1.7 Q24 3 25.1 11.3" fill="none" stroke="#667085" stroke-width="2.05" stroke-linecap="round"/></svg>
<div class="t" style="left:828.6px;top:272.6px;font-size:17px;font-weight:700;color:#6b7280;">Call</div>
<div class="t" style="left:1059.5px;top:268.6px;font-size:21.7px;font-weight:400;color:#262b33;letter-spacing:0.140px;">demo@demo.com</div>
<div style="position:absolute;left:1267.5px;top:260.3px;width:112.5px;height:38.3px;box-sizing:border-box;background:#fff;border:1px solid #e6e7ea;border-radius:9px;box-shadow:0 6px 12px rgba(16,24,40,.07)"></div>
<div style="position:absolute;left:1305.9px;top:260.3px;width:1px;height:38.3px;background:#e6e7ea"></div>
<svg style="position:absolute;left:1274.0px;top:268.5px" width="26" height="22" viewBox="0 0 25 22"><rect x="2" y="2.5" width="21" height="17" rx="3" fill="none" stroke="#667085" stroke-width="2.2"/><path d="M2.5 5 L12.5 12 L22.5 5" fill="none" stroke="#667085" stroke-width="2.2" stroke-linejoin="round"/></svg>
<div class="t" style="left:1321.4px;top:271.7px;font-size:16.9px;font-weight:700;color:#6b7280;">Email</div>
<div class="t" style="left:1727.2px;top:255.6px;font-size:20.8px;font-weight:400;color:#344054;letter-spacing:-0.026px;">May 16 2024</div>
<div class="t" style="left:1732.2px;top:282.1px;font-size:20.4px;font-weight:400;color:#3b8ee0;">11:11 PM</div>
<div class="t" style="left:1822.5px;top:286.7px;font-size:15.0px;font-weight:400;color:#3b8ee0;">(PDT)</div>
<svg style="position:absolute;left:34.6px;top:347.0px" width="6" height="24" viewBox="0 0 6 24"><circle cx="3" cy="3" r="2.9" fill="#a9aeb4"/><circle cx="3" cy="12" r="2.9" fill="#a9aeb4"/><circle cx="3" cy="21" r="2.9" fill="#a9aeb4"/></svg>
<div style="position:absolute;left:66.0px;top:344.2px;width:29.5px;height:29.5px;box-sizing:border-box;background:#fff;border:1.3px solid #cfd4dc;border-radius:6px"></div>
<div style="position:absolute;left:163.0px;top:326.0px;width:66px;height:66px;border-radius:50%;background:#c0b277"></div>
<div class="t" style="left:163.0px;top:348.0px;font-size:21.6px;font-weight:400;color:#fff;width:66px;text-align:center">SJ</div>
<div class="t" style="left:244.3px;top:347.5px;font-size:21.85px;font-weight:400;color:#262b33;letter-spacing:0.111px;">Steve Jobs</div>
<div class="t" style="left:599.3px;top:348.0px;font-size:21.9px;font-weight:400;color:#262b33;letter-spacing:0.465px;">(949) 201-5602</div>
<div style="position:absolute;left:783.4px;top:340.3px;width:99.2px;height:38.3px;box-sizing:border-box;background:#fff;border:1px solid #e6e7ea;border-radius:9px;box-shadow:0 6px 12px rgba(16,24,40,.07)"></div>
<div style="position:absolute;left:821.0px;top:340.3px;width:1px;height:38.3px;background:#e6e7ea"></div>
<svg style="position:absolute;left:788.4px;top:346.0px" width="26" height="26" viewBox="0 0 26 26"><path d="M3.0 6.0 C3.5 4.0 6.5 3.2 8.3 5.3 C9.6 6.9 9.4 8.8 8.4 10.4 C9.6 13.2 12.7 16.3 15.9 17.5 C17.4 16.4 19.6 16.2 21.2 17.6 C23.0 19.3 22.6 22.3 20.4 23.6 C18.8 24.6 16.5 24.0 14.4 23.2 C8.8 21.0 4.3 16.4 2.6 10.8 C2.1 9.1 2.4 7.4 3.0 6.0 Z" fill="none" stroke="#667085" stroke-width="2.05" stroke-linejoin="round"/><path d="M15.3 6.4 Q19.6 7.2 20.6 11.3 M15.3 1.7 Q24 3 25.1 11.3" fill="none" stroke="#667085" stroke-width="2.05" stroke-linecap="round"/></svg>
<div class="t" style="left:837.0px;top:351.6px;font-size:17px;font-weight:700;color:#6b7280;">Call</div>
<div class="t" style="left:1059.5px;top:347.6px;font-size:21.7px;font-weight:400;color:#262b33;letter-spacing:0.180px;">cerove9631@goulink.com</div>
<div style="position:absolute;left:1342.0px;top:339.3px;width:112.5px;height:38.3px;box-sizing:border-box;background:#fff;border:1px solid #e6e7ea;border-radius:9px;box-shadow:0 6px 12px rgba(16,24,40,.07)"></div>
<div style="position:absolute;left:1380.4px;top:339.3px;width:1px;height:38.3px;background:#e6e7ea"></div>
<svg style="position:absolute;left:1348.5px;top:347.5px" width="26" height="22" viewBox="0 0 25 22"><rect x="2" y="2.5" width="21" height="17" rx="3" fill="none" stroke="#667085" stroke-width="2.2"/><path d="M2.5 5 L12.5 12 L22.5 5" fill="none" stroke="#667085" stroke-width="2.2" stroke-linejoin="round"/></svg>
<div class="t" style="left:1395.9px;top:350.7px;font-size:16.9px;font-weight:700;color:#6b7280;">Email</div>
<div class="t" style="left:1727.2px;top:334.6px;font-size:20.8px;font-weight:400;color:#344054;letter-spacing:-0.026px;">May 03 2024</div>
<div class="t" style="left:1732.2px;top:361.1px;font-size:20.4px;font-weight:400;color:#3b8ee0;">09:45 PM</div>
<div class="t" style="left:1825.5px;top:365.7px;font-size:15.0px;font-weight:400;color:#3b8ee0;">(PDT)</div>
<svg style="position:absolute;left:34.6px;top:426.0px" width="6" height="24" viewBox="0 0 6 24"><circle cx="3" cy="3" r="2.9" fill="#a9aeb4"/><circle cx="3" cy="12" r="2.9" fill="#a9aeb4"/><circle cx="3" cy="21" r="2.9" fill="#a9aeb4"/></svg>
<div style="position:absolute;left:66.0px;top:423.2px;width:29.5px;height:29.5px;box-sizing:border-box;background:#fff;border:1.3px solid #cfd4dc;border-radius:6px"></div>
<div style="position:absolute;left:163.0px;top:405.0px;width:66px;height:66px;border-radius:50%;background:#80bb76"></div>
<div class="t" style="left:163.0px;top:427.0px;font-size:21.6px;font-weight:400;color:#fff;width:66px;text-align:center">TE</div>
<div class="t" style="left:244.3px;top:426.5px;font-size:21.85px;font-weight:400;color:#262b33;letter-spacing:0.001px;">Tommie Eymer</div>
<div class="t" style="left:599.3px;top:427.0px;font-size:21.9px;font-weight:400;color:#262b33;letter-spacing:0.718px;">(864) 354-4278</div>
<div style="position:absolute;left:786.7px;top:419.3px;width:99.2px;height:38.3px;box-sizing:border-box;background:#fff;border:1px solid #e6e7ea;border-radius:9px;box-shadow:0 6px 12px rgba(16,24,40,.07)"></div>
<div style="position:absolute;left:824.3px;top:419.3px;width:1px;height:38.3px;background:#e6e7ea"></div>
<svg style="position:absolute;left:791.7px;top:425.0px" width="26" height="26" viewBox="0 0 26 26"><path d="M3.0 6.0 C3.5 4.0 6.5 3.2 8.3 5.3 C9.6 6.9 9.4 8.8 8.4 10.4 C9.6 13.2 12.7 16.3 15.9 17.5 C17.4 16.4 19.6 16.2 21.2 17.6 C23.0 19.3 22.6 22.3 20.4 23.6 C18.8 24.6 16.5 24.0 14.4 23.2 C8.8 21.0 4.3 16.4 2.6 10.8 C2.1 9.1 2.4 7.4 3.0 6.0 Z" fill="none" stroke="#667085" stroke-width="2.05" stroke-linejoin="round"/><path d="M15.3 6.4 Q19.6 7.2 20.6 11.3 M15.3 1.7 Q24 3 25.1 11.3" fill="none" stroke="#667085" stroke-width="2.05" stroke-linecap="round"/></svg>
<div class="t" style="left:840.3px;top:430.6px;font-size:17px;font-weight:700;color:#6b7280;">Call</div>
<div class="t" style="left:1059.5px;top:426.6px;font-size:21.7px;font-weight:400;color:#262b33;letter-spacing:0.304px;">teymer36@abc.net.au</div>
<div style="position:absolute;left:1307.5px;top:418.3px;width:112.5px;height:38.3px;box-sizing:border-box;background:#fff;border:1px solid #e6e7ea;border-radius:9px;box-shadow:0 6px 12px rgba(16,24,40,.07)"></div>
<div style="position:absolute;left:1345.9px;top:418.3px;width:1px;height:38.3px;background:#e6e7ea"></div>
<svg style="position:absolute;left:1314.0px;top:426.5px" width="26" height="22" viewBox="0 0 25 22"><rect x="2" y="2.5" width="21" height="17" rx="3" fill="none" stroke="#667085" stroke-width="2.2"/><path d="M2.5 5 L12.5 12 L22.5 5" fill="none" stroke="#667085" stroke-width="2.2" stroke-linejoin="round"/></svg>
<div class="t" style="left:1361.4px;top:429.7px;font-size:16.9px;font-weight:700;color:#6b7280;">Email</div>
<div class="t" style="left:1727.2px;top:413.6px;font-size:20.8px;font-weight:400;color:#344054;letter-spacing:-0.240px;">Jan 18 2023</div>
<div class="t" style="left:1732.2px;top:440.1px;font-size:20.4px;font-weight:400;color:#3b8ee0;">10:00 AM</div>
<div class="t" style="left:1825.5px;top:444.7px;font-size:15.0px;font-weight:400;color:#3b8ee0;">(PST)</div>
<div style="position:absolute;left:2306.0px;top:413.2px;width:112.183203125px;height:41.8px;background:#e1effd;border-radius:10px"></div>
<div class="t" style="left:2318.8px;top:424.7px;font-size:18.2px;font-weight:700;color:#1f3b8f;">Interested</div>
<svg style="position:absolute;left:34.6px;top:505.0px" width="6" height="24" viewBox="0 0 6 24"><circle cx="3" cy="3" r="2.9" fill="#a9aeb4"/><circle cx="3" cy="12" r="2.9" fill="#a9aeb4"/><circle cx="3" cy="21" r="2.9" fill="#a9aeb4"/></svg>
<div style="position:absolute;left:66.0px;top:502.2px;width:29.5px;height:29.5px;box-sizing:border-box;background:#fff;border:1.3px solid #cfd4dc;border-radius:6px"></div>
<div style="position:absolute;left:163.0px;top:484.0px;width:66px;height:66px;border-radius:50%;background:#a179bf"></div>
<div class="t" style="left:163.0px;top:506.0px;font-size:21.6px;font-weight:400;color:#fff;width:66px;text-align:center">RG</div>
<div class="t" style="left:244.3px;top:505.5px;font-size:21.85px;font-weight:400;color:#262b33;letter-spacing:-0.169px;">Roselle Greenhowe</div>
<div class="t" style="left:1059.5px;top:505.6px;font-size:21.7px;font-weight:400;color:#262b33;letter-spacing:0.353px;">rgreenhowe3r@phpbb.com</div>
<div style="position:absolute;left:1358.4px;top:497.3px;width:112.5px;height:38.3px;box-sizing:border-box;background:#fff;border:1px solid #e6e7ea;border-radius:9px;box-shadow:0 6px 12px rgba(16,24,40,.07)"></div>
<div style="position:absolute;left:1396.8px;top:497.3px;width:1px;height:38.3px;background:#e6e7ea"></div>
<svg style="position:absolute;left:1364.9px;top:505.5px" width="26" height="22" viewBox="0 0 25 22"><rect x="2" y="2.5" width="21" height="17" rx="3" fill="none" stroke="#667085" stroke-width="2.2"/><path d="M2.5 5 L12.5 12 L22.5 5" fill="none" stroke="#667085" stroke-width="2.2" stroke-linejoin="round"/></svg>
<div class="t" style="left:1412.3px;top:508.7px;font-size:16.9px;font-weight:700;color:#6b7280;">Email</div>
<div class="t" style="left:1727.2px;top:492.6px;font-size:20.8px;font-weight:400;color:#344054;letter-spacing:-0.240px;">Jan 18 2023</div>
<div class="t" style="left:1732.2px;top:519.1px;font-size:20.4px;font-weight:400;color:#3b8ee0;">10:00 AM</div>
<div class="t" style="left:1825.5px;top:523.7px;font-size:15.0px;font-weight:400;color:#3b8ee0;">(PST)</div>
<div style="position:absolute;left:2306.0px;top:492.2px;width:67.678515625px;height:41.8px;background:#e1effd;border-radius:10px"></div>
<div class="t" style="left:2318.8px;top:503.7px;font-size:18.2px;font-weight:700;color:#1f3b8f;">Lead</div>
<svg style="position:absolute;left:34.6px;top:584.0px" width="6" height="24" viewBox="0 0 6 24"><circle cx="3" cy="3" r="2.9" fill="#a9aeb4"/><circle cx="3" cy="12" r="2.9" fill="#a9aeb4"/><circle cx="3" cy="21" r="2.9" fill="#a9aeb4"/></svg>
<div style="position:absolute;left:66.0px;top:581.2px;width:29.5px;height:29.5px;box-sizing:border-box;background:#fff;border:1.3px solid #cfd4dc;border-radius:6px"></div>
<div style="position:absolute;left:163.0px;top:563.0px;width:66px;height:66px;border-radius:50%;background:#7098c0"></div>
<div class="t" style="left:163.0px;top:585.0px;font-size:21.6px;font-weight:400;color:#fff;width:66px;text-align:center">CM</div>
<div class="t" style="left:244.3px;top:584.5px;font-size:21.85px;font-weight:400;color:#262b33;letter-spacing:0.295px;">Colette Majury</div>
<div class="t" style="left:1059.5px;top:584.6px;font-size:21.7px;font-weight:400;color:#262b33;letter-spacing:0.234px;">cmajury44@amazon.com</div>
<div style="position:absolute;left:1339.0px;top:576.3px;width:112.5px;height:38.3px;box-sizing:border-box;background:#fff;border:1px solid #e6e7ea;border-radius:9px;box-shadow:0 6px 12px rgba(16,24,40,.07)"></div>
<div style="position:absolute;left:1377.4px;top:576.3px;width:1px;height:38.3px;background:#e6e7ea"></div>
<svg style="position:absolute;left:1345.5px;top:584.5px" width="26" height="22" viewBox="0 0 25 22"><rect x="2" y="2.5" width="21" height="17" rx="3" fill="none" stroke="#667085" stroke-width="2.2"/><path d="M2.5 5 L12.5 12 L22.5 5" fill="none" stroke="#667085" stroke-width="2.2" stroke-linejoin="round"/></svg>
<div class="t" style="left:1392.9px;top:587.7px;font-size:16.9px;font-weight:700;color:#6b7280;">Email</div>
<div class="t" style="left:1727.2px;top:571.6px;font-size:20.8px;font-weight:400;color:#344054;letter-spacing:-0.240px;">Jan 18 2023</div>
<div class="t" style="left:1732.2px;top:598.1px;font-size:20.4px;font-weight:400;color:#3b8ee0;">10:00 AM</div>
<div class="t" style="left:1825.5px;top:602.7px;font-size:15.0px;font-weight:400;color:#3b8ee0;">(PST)</div>
<svg style="position:absolute;left:1972.5px;top:589.0px" width="19" height="15" viewBox="0 0 19 15"><rect x="0" y="0" width="19" height="15" rx="1.5" fill="#1e82e6"/><path d="M0.5 1.5 L9.5 8 L18.5 1.5" fill="none" stroke="#fff" stroke-width="1.6"/></svg>
<div class="t" style="left:2006.5px;top:585.2px;font-size:21.6px;font-weight:400;color:#262b33;letter-spacing:-0.153px;">1 year ago</div>
<div style="position:absolute;left:2306.0px;top:571.2px;width:91.9392578125px;height:41.8px;background:#e1effd;border-radius:10px"></div>
<div class="t" style="left:2318.8px;top:582.7px;font-size:18.2px;font-weight:700;color:#1f3b8f;">Booked</div>
<svg style="position:absolute;left:34.6px;top:663.0px" width="6" height="24" viewBox="0 0 6 24"><circle cx="3" cy="3" r="2.9" fill="#a9aeb4"/><circle cx="3" cy="12" r="2.9" fill="#a9aeb4"/><circle cx="3" cy="21" r="2.9" fill="#a9aeb4"/></svg>
<div style="position:absolute;left:66.0px;top:660.2px;width:29.5px;height:29.5px;box-sizing:border-box;background:#fff;border:1.3px solid #cfd4dc;border-radius:6px"></div>
<div style="position:absolute;left:163.0px;top:642.0px;width:66px;height:66px;border-radius:50%;background:#c0b277"></div>
<div class="t" style="left:163.0px;top:664.0px;font-size:21.6px;font-weight:400;color:#fff;width:66px;text-align:center">HM</div>
<div class="t" style="left:244.3px;top:663.5px;font-size:21.85px;font-weight:400;color:#262b33;letter-spacing:0.140px;">Happy Machen</div>
<div class="t" style="left:1059.5px;top:663.6px;font-size:21.7px;font-weight:400;color:#262b33;letter-spacing:0.151px;">hmachen45@si.edu</div>
<div style="position:absolute;left:1283.2px;top:655.3px;width:112.5px;height:38.3px;box-sizing:border-box;background:#fff;border:1px solid #e6e7ea;border-radius:9px;box-shadow:0 6px 12px rgba(16,24,40,.07)"></div>
<div style="position:absolute;left:1321.6px;top:655.3px;width:1px;height:38.3px;background:#e6e7ea"></div>
<svg style="position:absolute;left:1289.7px;top:663.5px" width="26" height="22" viewBox="0 0 25 22"><rect x="2" y="2.5" width="21" height="17" rx="3" fill="none" stroke="#667085" stroke-width="2.2"/><path d="M2.5 5 L12.5 12 L22.5 5" fill="none" stroke="#667085" stroke-width="2.2" stroke-linejoin="round"/></svg>
<div class="t" style="left:1337.1px;top:666.7px;font-size:16.9px;font-weight:700;color:#6b7280;">Email</div>
<div class="t" style="left:1727.2px;top:650.6px;font-size:20.8px;font-weight:400;color:#344054;letter-spacing:-0.240px;">Jan 18 2023</div>
<div class="t" style="left:1732.2px;top:677.1px;font-size:20.4px;font-weight:400;color:#3b8ee0;">10:00 AM</div>
<div class="t" style="left:1825.5px;top:681.7px;font-size:15.0px;font-weight:400;color:#3b8ee0;">(PST)</div>
<div style="position:absolute;left:2306.0px;top:650.2px;width:147.56123046874998px;height:41.8px;background:#e1effd;border-radius:10px"></div>
<div class="t" style="left:2318.8px;top:661.7px;font-size:18.2px;font-weight:700;color:#1f3b8f;">Not Interested</div>
<svg style="position:absolute;left:34.6px;top:742.0px" width="6" height="24" viewBox="0 0 6 24"><circle cx="3" cy="3" r="2.9" fill="#a9aeb4"/><circle cx="3" cy="12" r="2.9" fill="#a9aeb4"/><circle cx="3" cy="21" r="2.9" fill="#a9aeb4"/></svg>
<div style="position:absolute;left:66.0px;top:739.2px;width:29.5px;height:29.5px;box-sizing:border-box;background:#fff;border:1.3px solid #cfd4dc;border-radius:6px"></div>
<div style="position:absolute;left:163.0px;top:721.0px;width:66px;height:66px;border-radius:50%;background:#7482c0"></div>
<div class="t" style="left:163.0px;top:743.0px;font-size:21.6px;font-weight:400;color:#fff;width:66px;text-align:center">VH</div>
<div class="t" style="left:244.3px;top:742.5px;font-size:21.85px;font-weight:400;color:#262b33;letter-spacing:0.041px;">Vanni Harverson</div>
<div class="t" style="left:599.3px;top:743.0px;font-size:21.9px;font-weight:400;color:#262b33;letter-spacing:0.291px;">+1 939 475 0295</div>
<div style="position:absolute;left:796.7px;top:735.3px;width:99.2px;height:38.3px;box-sizing:border-box;background:#fff;border:1px solid #e6e7ea;border-radius:9px;box-shadow:0 6px 12px rgba(16,24,40,.07)"></div>
<div style="position:absolute;left:834.3px;top:735.3px;width:1px;height:38.3px;background:#e6e7ea"></div>
<svg style="position:absolute;left:801.7px;top:741.0px" width="26" height="26" viewBox="0 0 26 26"><path d="M3.0 6.0 C3.5 4.0 6.5 3.2 8.3 5.3 C9.6 6.9 9.4 8.8 8.4 10.4 C9.6 13.2 12.7 16.3 15.9 17.5 C17.4 16.4 19.6 16.2 21.2 17.6 C23.0 19.3 22.6 22.3 20.4 23.6 C18.8 24.6 16.5 24.0 14.4 23.2 C8.8 21.0 4.3 16.4 2.6 10.8 C2.1 9.1 2.4 7.4 3.0 6.0 Z" fill="none" stroke="#667085" stroke-width="2.05" stroke-linejoin="round"/><path d="M15.3 6.4 Q19.6 7.2 20.6 11.3 M15.3 1.7 Q24 3 25.1 11.3" fill="none" stroke="#667085" stroke-width="2.05" stroke-linecap="round"/></svg>
<div class="t" style="left:850.3px;top:746.6px;font-size:17px;font-weight:700;color:#6b7280;">Call</div>
<div class="t" style="left:1059.5px;top:742.6px;font-size:21.7px;font-weight:400;color:#262b33;letter-spacing:0.321px;">vharverson3f@psu.edu</div>
<div style="position:absolute;left:1318.4px;top:734.3px;width:112.5px;height:38.3px;box-sizing:border-box;background:#fff;border:1px solid #e6e7ea;border-radius:9px;box-shadow:0 6px 12px rgba(16,24,40,.07)"></div>
<div style="position:absolute;left:1356.8px;top:734.3px;width:1px;height:38.3px;background:#e6e7ea"></div>
<svg style="position:absolute;left:1324.9px;top:742.5px" width="26" height="22" viewBox="0 0 25 22"><rect x="2" y="2.5" width="21" height="17" rx="3" fill="none" stroke="#667085" stroke-width="2.2"/><path d="M2.5 5 L12.5 12 L22.5 5" fill="none" stroke="#667085" stroke-width="2.2" stroke-linejoin="round"/></svg>
<div class="t" style="left:1372.3px;top:745.7px;font-size:16.9px;font-weight:700;color:#6b7280;">Email</div>
<div class="t" style="left:1727.2px;top:729.6px;font-size:20.8px;font-weight:400;color:#344054;letter-spacing:-0.240px;">Jan 18 2023</div>
<div class="t" style="left:1732.2px;top:756.1px;font-size:20.4px;font-weight:400;color:#3b8ee0;">10:00 AM</div>
<div class="t" style="left:1825.5px;top:760.7px;font-size:15.0px;font-weight:400;color:#3b8ee0;">(PST)</div>
<svg style="position:absolute;left:1972.5px;top:747.0px" width="19" height="15" viewBox="0 0 19 15"><rect x="0" y="0" width="19" height="15" rx="1.5" fill="#1e82e6"/><path d="M0.5 1.5 L9.5 8 L18.5 1.5" fill="none" stroke="#fff" stroke-width="1.6"/></svg>
<div class="t" style="left:2006.5px;top:743.2px;font-size:21.6px;font-weight:400;color:#262b33;letter-spacing:-0.153px;">1 year ago</div>
<div style="position:absolute;left:2306.0px;top:729.2px;width:91.9392578125px;height:41.8px;background:#e1effd;border-radius:10px"></div>
<div class="t" style="left:2318.8px;top:740.7px;font-size:18.2px;font-weight:700;color:#1f3b8f;">Booked</div>
<svg style="position:absolute;left:34.6px;top:821.0px" width="6" height="24" viewBox="0 0 6 24"><circle cx="3" cy="3" r="2.9" fill="#a9aeb4"/><circle cx="3" cy="12" r="2.9" fill="#a9aeb4"/><circle cx="3" cy="21" r="2.9" fill="#a9aeb4"/></svg>
<div style="position:absolute;left:66.0px;top:818.2px;width:29.5px;height:29.5px;box-sizing:border-box;background:#fff;border:1.3px solid #cfd4dc;border-radius:6px"></div>
<div style="position:absolute;left:163.0px;top:800.0px;width:66px;height:66px;border-radius:50%;background:#72bd9d"></div>
<div class="t" style="left:163.0px;top:822.0px;font-size:21.6px;font-weight:400;color:#fff;width:66px;text-align:center">JL</div>
<div class="t" style="left:244.3px;top:821.5px;font-size:21.85px;font-weight:400;color:#262b33;letter-spacing:0.115px;">Jayme Lindop</div>
<div class="t" style="left:1059.5px;top:821.6px;font-size:21.7px;font-weight:400;color:#262b33;letter-spacing:0.357px;">jlindop3x@wp.com</div>
<div style="position:absolute;left:1275.4px;top:813.3px;width:112.5px;height:38.3px;box-sizing:border-box;background:#fff;border:1px solid #e6e7ea;border-radius:9px;box-shadow:0 6px 12px rgba(16,24,40,.07)"></div>
<div style="position:absolute;left:1313.8px;top:813.3px;width:1px;height:38.3px;background:#e6e7ea"></div>
<svg style="position:absolute;left:1281.9px;top:821.5px" width="26" height="22" viewBox="0 0 25 22"><rect x="2" y="2.5" width="21" height="17" rx="3" fill="none" stroke="#667085" stroke-width="2.2"/><path d="M2.5 5 L12.5 12 L22.5 5" fill="none" stroke="#667085" stroke-width="2.2" stroke-linejoin="round"/></svg>
<div class="t" style="left:1329.3px;top:824.7px;font-size:16.9px;font-weight:700;color:#6b7280;">Email</div>
<div class="t" style="left:1727.2px;top:808.6px;font-size:20.8px;font-weight:400;color:#344054;letter-spacing:-0.240px;">Jan 18 2023</div>
<div class="t" style="left:1732.2px;top:835.1px;font-size:20.4px;font-weight:400;color:#3b8ee0;">10:00 AM</div>
<div class="t" style="left:1825.5px;top:839.7px;font-size:15.0px;font-weight:400;color:#3b8ee0;">(PST)</div>
<div style="position:absolute;left:2306.0px;top:808.2px;width:147.56123046874998px;height:41.8px;background:#e1effd;border-radius:10px"></div>
<div class="t" style="left:2318.8px;top:819.7px;font-size:18.2px;font-weight:700;color:#1f3b8f;">Not Interested</div>
<svg style="position:absolute;left:34.6px;top:900.0px" width="6" height="24" viewBox="0 0 6 24"><circle cx="3" cy="3" r="2.9" fill="#a9aeb4"/><circle cx="3" cy="12" r="2.9" fill="#a9aeb4"/><circle cx="3" cy="21" r="2.9" fill="#a9aeb4"/></svg>
<div style="position:absolute;left:66.0px;top:897.2px;width:29.5px;height:29.5px;box-sizing:border-box;background:#fff;border:1.3px solid #cfd4dc;border-radius:6px"></div>
<div style="position:absolute;left:163.0px;top:879.0px;width:66px;height:66px;border-radius:50%;background:#74bd88"></div>
<div class="t" style="left:163.0px;top:901.0px;font-size:21.6px;font-weight:400;color:#fff;width:66px;text-align:center">WJ</div>
<div class="t" style="left:244.3px;top:900.5px;font-size:21.85px;font-weight:400;color:#262b33;letter-spacing:0.103px;">Ware Jellybrand</div>
<div class="t" style="left:1059.5px;top:900.6px;font-size:21.7px;font-weight:400;color:#262b33;letter-spacing:0.364px;">wjellybrand3o@booking.com</div>
<div style="position:absolute;left:1374.1px;top:892.3px;width:112.5px;height:38.3px;box-sizing:border-box;background:#fff;border:1px solid #e6e7ea;border-radius:9px;box-shadow:0 6px 12px rgba(16,24,40,.07)"></div>
<div style="position:absolute;left:1412.5px;top:892.3px;width:1px;height:38.3px;background:#e6e7ea"></div>
<svg style="position:absolute;left:1380.6px;top:900.5px" width="26" height="22" viewBox="0 0 25 22"><rect x="2" y="2.5" width="21" height="17" rx="3" fill="none" stroke="#667085" stroke-width="2.2"/><path d="M2.5 5 L12.5 12 L22.5 5" fill="none" stroke="#667085" stroke-width="2.2" stroke-linejoin="round"/></svg>
<div class="t" style="left:1428.0px;top:903.7px;font-size:16.9px;font-weight:700;color:#6b7280;">Email</div>
<div class="t" style="left:1727.2px;top:887.6px;font-size:20.8px;font-weight:400;color:#344054;letter-spacing:-0.240px;">Jan 18 2023</div>
<div class="t" style="left:1732.2px;top:914.1px;font-size:20.4px;font-weight:400;color:#3b8ee0;">10:00 AM</div>
<div class="t" style="left:1825.5px;top:918.7px;font-size:15.0px;font-weight:400;color:#3b8ee0;">(PST)</div>
<div style="position:absolute;left:2306.0px;top:887.2px;width:67.678515625px;height:41.8px;background:#e1effd;border-radius:10px"></div>
<div class="t" style="left:2318.8px;top:898.7px;font-size:18.2px;font-weight:700;color:#1f3b8f;">Lead</div>
</div>
<div style="position:absolute;left:2931px;top:434px;width:9px;height:571px;background:#bdbdbd;border-radius:4.5px"></div>
<div style="position:absolute;left:336px;top:1429px;width:2594px;height:1px;background:#e2e4e8"></div>
<div class="t" style="left:1328.5px;top:1461.7px;font-size:22.0px;font-weight:400;color:#1f2937;letter-spacing:0.33px">Total <b>204</b> records</div>
<div style="position:absolute;left:1514.0px;top:1460.3px;width:1.8px;height:24.7px;background:#1f2937"></div>
<div class="t" style="left:1524.0px;top:1461.7px;font-size:22.0px;font-weight:400;color:#1f2937;letter-spacing:-0.42px"><b>1</b> of 11 Pages</div>
<div style="position:absolute;left:1677.7px;top:1445.8px;width:39.5px;height:56px;box-sizing:border-box;background:#fff;border:1px solid #e6e7ea;border-radius:10px;box-shadow:0 1px 6px rgba(16,24,40,.05)"></div>
<div class="t" style="left:1690.7px;top:1461.7px;font-size:22px;font-weight:400;color:#1f2937;">1</div>
<svg style="position:absolute;left:1734px;top:1465.3px;" width="12" height="16" viewBox="0 0 12 16"><path d="M2.5 2 L8.5 8 L2.5 14" fill="none" stroke="#1f2937" stroke-width="3"/></svg>
<div class="t" style="left:1784.0px;top:1462.1px;font-size:21.5px;font-weight:400;color:#1f2937;">Page Size: 20</div>
<svg style="position:absolute;left:1937px;top:1469.3px;" width="13" height="8" viewBox="0 0 13 8"><path d="M0 0 H13 L6.5 7 Z" fill="#a9b0b8"/></svg>
<div style="position:absolute;left:336px;top:1517px;width:2604px;height:1px;background:#e6e7ea"></div>
<div style="position:absolute;left:2838px;top:1359px;width:72px;height:72px;border-radius:50%;background:#1e7ee0;box-shadow:0 4px 14px rgba(0,0,0,.12)"></div>
<svg style="position:absolute;left:2855px;top:1375px;" width="40" height="42" viewBox="0 0 40 42"><defs><linearGradient id="qg" x1="0" y1="0" x2="0" y2="1"><stop offset="0" stop-color="#ff8a3d"/><stop offset="0.45" stop-color="#e8354e"/><stop offset="1" stop-color="#5a2a86"/></linearGradient></defs><path d="M10.5 12.5 Q10.5 4.5 20 4.5 Q29.5 4.5 29.5 12.5 Q29.5 17 24.5 20.5 Q20.5 23 20.5 26.5 L20.5 28" fill="none" stroke="url(#qg)" stroke-width="6.5" stroke-linecap="round"/><circle cx="20.5" cy="35.5" r="3.8" fill="#6a2a80"/></svg>
<div style="position:absolute;left:1029.9px;top:20.9px;width:147.2px;height:147.2px;border-radius:50%;background:rgba(0,0,0,.4)"></div>
<div style="position:absolute;left:1068px;top:59px;width:71px;height:71px;border-radius:50%;background:#000"></div>
</body></html>
